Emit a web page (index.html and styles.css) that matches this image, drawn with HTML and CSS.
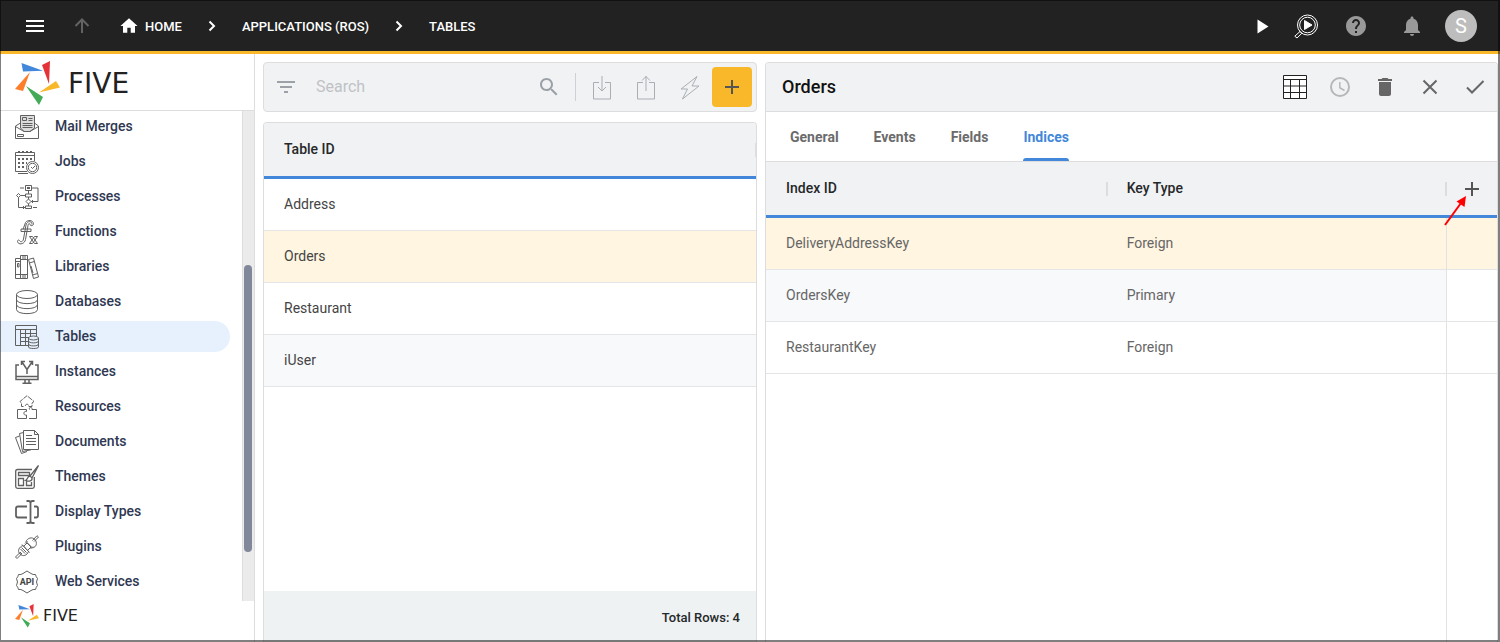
FILE: index.html
```html
<!DOCTYPE html>
<html lang="en">
<head>
<meta charset="utf-8">
<title>Five - Tables</title>
<meta name="viewport" content="width=device-width, initial-scale=1">
<link rel="stylesheet" href="styles.css">
</head>
<body>
<svg class="defs" aria-hidden="true">
  <symbol id="pinwheel" viewBox="0 0 45 45">
    <path fill="#4287d9" d="M6.500 2L28 9.800L8 10.500Z"/>
    <path fill="#e53238" d="M27 4L35 0L34 23Z"/>
    <path fill="#f9b82a" d="M24 31.500L41 20L45 26.500Z"/>
    <path fill="#43aa57" d="M11 25L28 36L24 44Z"/>
    <path fill="#fd7d2a" d="M0 28L15 11L8 30Z"/>
  </symbol>
  <symbol id="chevron" viewBox="0 0 24 24"><path d="M9.500 7.500L14 12L9.500 16.500" fill="none" stroke="currentColor" stroke-width="2"/></symbol>
  <symbol id="plus" viewBox="0 0 24 24"><path d="M12 5V19M5 12H19" fill="none" stroke="currentColor" stroke-width="2"/></symbol>
</svg>

<header class="topbar">
  <button class="icon-btn" aria-label="Menu"><svg class="icon" viewBox="0 0 24 24"><path fill="currentColor" d="M3 6h18v2H3zM3 11h18v2H3zM3 16h18v2H3z"/></svg></button>
  <button class="icon-btn up" aria-label="Up"><svg class="icon line2" viewBox="0 0 24 24"><path d="M12 19V6M5.500 12L12 5.500L18.500 12"/></svg></button>
  <nav class="crumbs" aria-label="Breadcrumb">
    <a class="crumb" href="#"><svg class="icon" viewBox="-2 -2 28 28"><path fill="currentColor" d="M10 20v-6h4v6h5v-8h3L12 3 2 12h3v8z"/></svg><span>HOME</span></a>
    <svg class="icon"><use href="#chevron"/></svg>
    <a class="crumb" href="#"><span>APPLICATIONS (ROS)</span></a>
    <svg class="icon"><use href="#chevron"/></svg>
    <a class="crumb" href="#"><span>TABLES</span></a>
  </nav>
  <div class="top-actions">
    <button class="icon-btn" aria-label="Run"><svg class="icon" viewBox="0 0 24 24"><path fill="currentColor" d="M7.500 5.500V19.500L18.500 12.500Z"/></svg></button>
    <button class="icon-btn" aria-label="Inspect run"><svg class="icon line1" viewBox="0 0 24 24"><circle cx="13.500" cy="11" r="10"/><circle cx="13.500" cy="11" r="7.800"/><path d="M6 17.500L7.800 19.300L3 24L.800 22.200Z"/><path fill="currentColor" d="M10.500 6.500V15.500L18 11Z"/></svg></button>
    <button class="icon-btn help" aria-label="Help"><svg class="icon" viewBox="0 0 24 24"><path fill="currentColor" d="M12 2C6.480 2 2 6.480 2 12s4.480 10 10 10 10-4.480 10-10S17.520 2 12 2zm1 17h-2v-2h2v2zm2.070-7.750l-.9.920C13.450 12.900 13 13.500 13 15h-2v-.5c0-1.100.45-2.100 1.170-2.830l1.240-1.260c.37-.36.59-.86.59-1.410 0-1.100-.9-2-2-2s-2 .9-2 2H8c0-2.210 1.790-4 4-4s4 1.790 4 4c0 .88-.36 1.680-.93 2.250z"/></svg></button>
    <button class="icon-btn bell" aria-label="Notifications"><svg class="icon" viewBox="0 0 24 24"><path fill="currentColor" d="M12 22c1.100 0 2-.9 2-2h-4c0 1.100.9 2 2 2zm6-6v-5c0-3.070-1.630-5.640-4.500-6.320V4c0-.83-.67-1.500-1.500-1.500s-1.500.67-1.500 1.500v.68C7.640 5.360 6 7.920 6 11v5l-2 2v1h16v-1l-2-2z"/></svg></button>
    <button class="avatar" aria-label="Account">S</button>
  </div>
</header>

<div class="workspace">
  <aside class="sidebar">
    <a class="brand" href="#"><svg class="brand-mark"><use href="#pinwheel"/></svg><span>FIVE</span></a>
    <div class="nav-scroll">
      <nav class="side-nav" aria-label="Sections">
        <a class="nav-item" href="#"><svg class="icon" viewBox="0 0 24 24"><path fill="#ddd" d="M5.500 13V.5H19.500V13L15 16.500H9Z"/><path d="M5.500 8L.5 11V23.500H23.500V11L19.500 8M.5 11.500L9 16.500H15L23.500 11.500M2.500 19.500H8.500V21.500H2.500ZM7.500 2.500H11.500V5.500H7.500ZM13.500 3.500H17.500M13.500 5.500H17.500M7.500 8.500H17.500M7.500 10.500H17.500M7.500 12.500H17.500"/></svg>Mail Merges</a>
        <a class="nav-item" href="#"><svg class="icon" viewBox="0 0 24 24"><path d="M12 21.500H.5V2.500H19.500V11M.5 5.500H19.500"/><path stroke-width="2" stroke-dasharray="2 2" d="M3 2H18M3 9H18M3 13H12M3 17H11"/><circle cx="17.500" cy="17.500" r="6"/><circle cx="17.500" cy="17.500" r="4.200"/><path d="M16 17L17.500 18.500L20 16M3 23.500H13"/></svg>Jobs</a>
        <a class="nav-item" href="#"><svg class="icon" viewBox="0 0 24 24"><path d="M10.500.5H16.500V5.500H10.500ZM12 2.500H15M12 3.500H15M13.500 5.500V9M10.500 9H16.500V12H10.500ZM13.500 12V14M13.500 14L16 16.500L13.500 19L11 16.500ZM13.500 19V21M10.500 21H16.500V23.500H10.500ZM16.500 3H23V16.500H16M18 15L16.500 16.500L18 18M3.500 8.500L5.500 10.500L3.500 12.500L1.500 10.500ZM5.500 10.500H10.500M3.500 12.500V22.500H10M8 21L9.500 22.500L8 24M5 3H9M18 22.500H22"/></svg>Processes</a>
        <a class="nav-item" href="#"><svg class="icon" viewBox="0 0 24 24"><path d="M17 4.500C17.500 1 12 .2 11 5L8.500 19C8 22 5.500 22.500 4.500 20.500C4 19.500 2.300 20 2.500 21.500C3 25 9.500 24.800 10.500 19.500L13 5.500C13.300 3 14.800 3 15 4.500C15.200 6.200 18.800 6.200 18.500 3.500C18 0 12.500-.5 10.500 2.500L8 9.500M6 9H16V11.500H6ZM14.500 16.500H17.500L22.500 23.500H19.500ZM19.500 16.500H22.500L17.500 23.500H14.500Z"/></svg>Functions</a>
        <a class="nav-item" href="#"><svg class="icon" viewBox="0 0 24 24"><path d="M.5 3.500H5.500V23.500H.5ZM5.500.5H12.500V23.500H5.500ZM.5 6.500H5.500M.5 19.500H5.500M2.500 8.500H4V12H2.500ZM5.500 4.500H12.500M5.500 19.500H12.500M8 .5V4M10 .5V4M8 20V23M10 20V23M13.500 4.500L18.500 3L23.500 22L18.500 23.500ZM14.300 8L19.300 6.500M17.500 20L22.500 18.500M16 11L18 18"/></svg>Libraries</a>
        <a class="nav-item" href="#"><svg class="icon" viewBox="0 0 24 24"><ellipse cx="12" cy="4.500" rx="10.500" ry="4"/><path d="M1.500 4.500V19.500C1.500 25 22.500 25 22.500 19.500V4.500M1.500 9.500C1.500 15 22.500 15 22.500 9.500M1.500 14.500C1.500 20 22.500 20 22.500 14.500"/></svg>Databases</a>
        <a class="nav-item active" href="#"><svg class="icon" viewBox="0 0 24 24"><path d="M13 20.500H.5V.5H21.500V11M.5 4.500H21.500M5.500 4.500V20.500M10.500 4.500V20.500M15.500 4.500V12M5.500 8.500H21.500M5.500 12.500H14M5.500 16.500H13"/><path fill="#e7f1fd" d="M13.500 13V22C13.500 24 23.500 24 23.500 22V13"/><ellipse cx="18.500" cy="13" rx="5" ry="2"/><path d="M13.500 16C13.500 18.500 23.500 18.500 23.500 16M13.500 19C13.500 21.500 23.500 21.500 23.500 19"/></svg>Tables</a>
        <a class="nav-item" href="#"><svg class="icon" viewBox="0 0 24 24"><path stroke-width="1.500" d="M4 5H1V19.500H23V5H20M1 16.500H23M10 20V22.500M14 20V22.500M7.500 23.300H16.500M12 14V9.500L7 2M12 9.500L17 2M6.500 5V1.500H10M14 1.500H17.500V5"/></svg>Instances</a>
        <a class="nav-item" href="#"><svg class="icon" viewBox="0 0 24 24"><path stroke-dasharray="5 1" d="M8.500 11.500H6.500V8.500L5 6.500L12 .7L19 6.500L17 8V11.500H13.500C14.500 8.500 9.500 8.500 10.500 11.500"/><path d="M2.500 14.500H11.500V16.500C8 15.500 8 21 11.500 20V23.500H2.500ZM14.500 14.500C13.500 11.500 17.500 11.500 17 14.500H21.500V23.500H14"/></svg>Resources</a>
        <a class="nav-item" href="#"><svg class="icon" viewBox="0 0 24 24"><path d="M8.500.5H19.500L23.500 4.500V19.500H8.500ZM19.500.5V4.500H23.500M11 5.500H17M11 8.500H21M11 11.500H21M11 14.500H21M8.500 2.500L4.500 3.500L7.500 21.500L16 19.800M4.500 6L.5 7.500L6.500 23.500L12 21.500"/></svg>Documents</a>
        <a class="nav-item" href="#"><svg class="icon" viewBox="0 0 24 24"><path stroke-width="1.300" d="M17 4.500H2.500Q.7 4.500 .7 6.500V21.500Q.7 23.300 2.500 23.300H17.500Q19.300 23.300 19.300 21.500V12M3.500 7.500H14.500V10.500H3.500ZM3.500 13.500H8.500V20.500H3.500ZM11.500 14V20.500H16.500V17M23.500 .5L15 11L17 13ZM15 11C12 11 13 14.500 10.500 15.500C14 17 17.500 16 17 13"/></svg>Themes</a>
        <a class="nav-item" href="#"><svg class="icon" viewBox="0 0 24 24"><path stroke-width="1.800" d="M12 6.500H3Q1 6.500 1 8.500V15.500Q1 17.500 3 17.500H12M19 6.500H21Q23 6.500 23 8.500V15.500Q23 17.500 21 17.500H19M15.500 2V22M11.500 1H13.500Q15.500 1 15.500 3Q15.500 1 17.500 1H19.500M11.500 23H13.500Q15.500 23 15.500 21Q15.500 23 17.500 23H19.500"/></svg>Display Types</a>
        <a class="nav-item" href="#"><svg class="icon" viewBox="0 0 24 24"><path d="M.5 22L5 17.500L6.500 19L2 23.500ZM17.500 5.500L22 .7L23.500 2L19 6.500M5 19C2 16 4 12 8 10.500L13.500 16.500C12 20.500 8 22 5 19ZM11 6.500L17.500 13C21.500 12 22.500 8 20 4.500C17 1.500 12.500 3 11 6.500ZM7 9.500L14.500 17.500M10 8.500L12.500 6M15.500 14L18 11.500M9 11L12 8L16 12L13 15M5.500 14L10 18.500M6.500 12.500L11.500 17.500M5 17L7 19"/></svg>Plugins</a>
        <a class="nav-item" href="#"><svg class="icon" viewBox="0 0 24 24"><path d="M8 3.500L12 1L16 3.500Q18 5 20.500 4.500Q21 7 22.500 8.500L21.500 12L22.500 15.500Q21 17 20.500 19.500Q18 19 16 20.500L12 23L8 20.500Q6 19 3.500 19.500Q3 17 1.500 15.500L2.500 12L1.500 8.500Q3 7 3.500 4.500Q6 5 8 3.500Z"/><text x="12" y="15" text-anchor="middle">API</text></svg>Web Services</a>
      </nav>
      <div class="scroll-track"><div class="scroll-thumb"></div></div>
    </div>
    <a class="brand small" href="#"><svg class="brand-mark"><use href="#pinwheel"/></svg><span>FIVE</span></a>
  </aside>

  <main class="content">
    <section class="list-pane">
      <div class="toolbar">
        <button class="icon-btn" aria-label="Filter"><svg class="icon" viewBox="0 0 24 24"><path fill="currentColor" d="M3 6h18v2H3zM6 11h12v2H6zM10 16h4v2h-4z"/></svg></button>
        <input class="search" type="search" placeholder="Search" aria-label="Search">
        <button class="icon-btn" aria-label="Find"><svg class="icon" viewBox="0 0 24 24"><path fill="currentColor" d="M15.500 14h-.79l-.28-.27C15.410 12.590 16 11.110 16 9.500 16 5.910 13.090 3 9.500 3S3 5.910 3 9.500 5.910 16 9.500 16c1.610 0 3.090-.59 4.230-1.570l.27.28v.79l5 4.990L20.490 19l-4.990-5zm-6 0C7.010 14 5 11.990 5 9.500S7.010 5 9.500 5 14 7.010 14 9.500 11.990 14 9.500 14z"/></svg></button>
        <span class="divider"></span>
        <div class="tool-group">
          <button class="icon-btn" aria-label="Import"><svg class="icon line1" viewBox="0 0 24 24"><path d="M9 7.500H3.500V24H20.500V7.500H15M12 1V16M8 12L12 16L16 12"/></svg></button>
          <button class="icon-btn" aria-label="Export"><svg class="icon line1" viewBox="0 0 24 24"><path d="M9 7.500H3.500V24H20.500V7.500H15M12 16V1M8 5.500L12 1.500L16 5.500"/></svg></button>
          <button class="icon-btn" aria-label="Quick actions"><svg class="icon line1" viewBox="0 0 24 24"><path d="M19 1.500L3 14H9.500L4.500 24L21 11H14Z"/></svg></button>
        </div>
        <button class="add-btn" aria-label="Add table"><svg class="icon"><use href="#plus"/></svg></button>
      </div>
      <div class="card">
        <table class="grid">
          <thead><tr><th class="resizable">Table ID</th></tr></thead>
          <tbody>
            <tr><td>Address</td></tr>
            <tr class="selected"><td>Orders</td></tr>
            <tr><td>Restaurant</td></tr>
            <tr class="alt"><td>iUser</td></tr>
          </tbody>
        </table>
        <footer class="totals">Total Rows: 4</footer>
      </div>
    </section>

    <section class="detail-pane">
      <div class="detail-head">
        <h1>Orders</h1>
        <div class="detail-actions">
          <button class="icon-btn data" aria-label="Data view"><svg class="icon line1" viewBox="0 0 24 24"><path fill="#fff" d="M.5.5H23.500V23.500H.5Z"/><path d="M.5 4.500H23.500M.5 11H23.500M.5 17.500H23.500M7.500 4.500V23.500M16.500 4.500V23.500"/></svg></button>
          <button class="icon-btn faded" aria-label="History"><svg class="icon line2" viewBox="0 0 24 24"><circle cx="12" cy="12" r="9"/><path stroke-width="1.500" d="M11.800 7V12.700L16.500 15.500"/></svg></button>
          <button class="icon-btn" aria-label="Delete"><svg class="icon" viewBox="0 0 24 24"><path fill="currentColor" d="M6 19c0 1.100.9 2 2 2h8c1.100 0 2-.9 2-2V7H6v12zM19 4h-3.500l-1-1h-5l-1 1H5v2h14V4z"/></svg></button>
          <button class="icon-btn" aria-label="Close"><svg class="icon line2" viewBox="0 0 24 24"><path d="M5.500 5.500L18.500 18.500M18.500 5.500L5.500 18.500"/></svg></button>
          <button class="icon-btn" aria-label="Save"><svg class="icon line2" viewBox="0 0 24 24"><path d="M4 12.500L9 17.500L20.500 6"/></svg></button>
        </div>
      </div>
      <div class="tabs" role="tablist">
        <button class="tab" role="tab">General</button>
        <button class="tab" role="tab">Events</button>
        <button class="tab" role="tab">Fields</button>
        <button class="tab current" role="tab" aria-selected="true">Indices</button>
      </div>
      <div class="index-wrap">
        <table class="grid indices">
          <thead><tr>
            <th class="resizable key-col">Index ID</th>
            <th class="resizable">Key Type</th>
            <th class="add-col">
              <button class="icon-btn" aria-label="Add index"><svg class="icon"><use href="#plus"/></svg></button>
              <svg class="pointer" viewBox="0 0 24 32" aria-hidden="true"><path d="M1 31L17 9" stroke="#f00" stroke-width="2"/><path d="M22 2L12.500 7.500L20.500 13Z" fill="#f00"/></svg>
            </th>
          </tr></thead>
          <tbody>
            <tr class="selected"><td>DeliveryAddressKey</td><td>Foreign</td><td class="add-col"></td></tr>
            <tr class="alt"><td>OrdersKey</td><td>Primary</td><td class="add-col"></td></tr>
            <tr><td>RestaurantKey</td><td>Foreign</td><td class="add-col"></td></tr>
            <tr class="filler"><td></td><td></td><td class="add-col"></td></tr>
          </tbody>
        </table>
      </div>
    </section>
  </main>
</div>
</body>
</html>
```
FILE: styles.css
```css
* { box-sizing: border-box; }

body {
  margin: 0;
  height: 100vh;
  display: flex;
  flex-direction: column;
  overflow: hidden;
  background: #fff;
  color: #262829;
  font: 14px/20px Roboto, "Liberation Sans", sans-serif;
}

/* Window frame laid over every edge of the app */
body::after {
  content: "";
  position: fixed;
  inset: 0;
  border: 1px solid rgba(0, 0, 0, .5);
  border-width: 1px 2px 2px 1px;
  pointer-events: none;
}

.defs { position: absolute; width: 0; height: 0; }

button {
  padding: 0;
  border: 0;
  background: none;
  color: inherit;
  font: inherit;
}
a { color: inherit; text-decoration: none; }

.icon { display: block; flex: none; width: 24px; height: 24px; overflow: visible; }
.icon-btn { flex: none; display: block; }
.line1, .line2 { fill: none; stroke: currentColor; }
.line2 { stroke-width: 2; }

/* Top bar */
.topbar {
  flex: none;
  display: flex;
  align-items: center;
  gap: 23px;
  height: 54px;
  padding: 0 23px;
  border-bottom: 3px solid #f9b82a;
  background: #222;
  color: #fff;
}
.up { color: #636363; }
.crumbs { display: flex; align-items: center; gap: 18px; font-size: 13px; font-weight: 500; }
.crumb { display: flex; align-items: center; gap: 4px; }
.crumb span { padding-top: 2px; }
.top-actions { display: flex; align-items: center; gap: 20px; margin-left: auto; }
.help, .bell { color: #999; }
.help { margin-left: 6px; }
.bell { margin-left: 12px; }
.avatar {
  width: 32px;
  height: 32px;
  margin-left: 1px;
  border-radius: 50%;
  background: #bdbdbd;
  font-size: 20px;
}

.workspace { flex: 1; min-height: 0; display: flex; }

/* Sidebar */
.sidebar {
  flex: none;
  display: flex;
  flex-direction: column;
  width: 255px;
  border-right: 1px solid #ddd;
}
.brand {
  flex: none;
  display: flex;
  align-items: center;
  gap: 8px;
  height: 57px;
  padding: 3px 0 0 15px;
  border-bottom: 1px solid #ddd;
  color: #222;
  font: 28px/32px "DejaVu Sans", sans-serif;
}
.brand-mark { width: 45px; height: 45px; }
.brand.small { gap: 4px; height: 41px; padding: 0 0 12px 15px; border: 0; font-size: 16px; line-height: 20px; }
.brand.small .brand-mark { width: 24px; height: 24px; }

.nav-scroll { flex: 1; min-height: 0; display: flex; overflow: hidden; }
.side-nav { flex: 1; display: flex; flex-direction: column; gap: 4px; padding-right: 12px; }
.nav-item {
  flex: none;
  display: flex;
  align-items: flex-start;
  gap: 16px;
  height: 31px;
  padding: 4px 0 0 15px;
  border-radius: 0 16px 16px 0;
  color: #2f3852;
  line-height: 22px;
  font-weight: 500;
}
.nav-item.active { background: #e7f1fd; }
.nav-item .icon { fill: none; stroke: #606060; }
.nav-item text { fill: #444; stroke: none; font: bold 9px Roboto, sans-serif; }
.scroll-track { width: 12px; padding: 154px 2px 49px 1px; border-left: 1px solid #ddd; background: #ebebeb; }
.scroll-thumb { height: 100%; border-radius: 4px; background: #82889b; }

/* Content panes */
.content {
  flex: 1;
  min-width: 0;
  display: grid;
  grid-template-columns: minmax(0, 494fr) minmax(0, 733fr);
  gap: 8px;
  padding: 8px 2px 0 8px;
}
.list-pane { display: flex; flex-direction: column; gap: 10px; min-height: 0; }
.toolbar {
  flex: none;
  display: flex;
  align-items: center;
  height: 50px;
  padding: 0 4px 0 10px;
  border: 1px solid #ddd;
  border-radius: 4px;
  background: #f1f2f4;
  color: #9ba1a7;
}
.search {
  flex: 1;
  min-width: 0;
  margin-left: 18px;
  padding: 0;
  border: 0;
  outline: 0;
  background: none;
  font: 16px/24px Roboto, sans-serif;
}
.search::placeholder { color: #bfc2c5; opacity: 1; }
.divider { width: 1px; height: 28px; margin: 0 14px; background: #ced1d4; }
.tool-group { display: flex; gap: 20px; margin-right: 10px; color: #a9aeb3; }
.add-btn {
  display: grid;
  place-items: center;
  width: 40px;
  height: 40px;
  border-radius: 4px;
  background: #f9b82a;
  color: #555;
}

.card, .detail-pane {
  display: flex;
  flex-direction: column;
  min-height: 0;
  border: 1px solid #ddd;
  border-bottom: 0;
  border-radius: 4px 4px 0 0;
  overflow: hidden;
}
.card { flex: 1; }

.grid { width: 100%; border-spacing: 0; table-layout: fixed; }
.grid th {
  position: relative;
  height: 56px;
  padding: 0 20px 2px;
  border-bottom: 3px solid #4287d9;
  background: #f1f2f4;
  text-align: left;
  font-weight: 500;
}
.grid td { height: 52px; padding: 0 20px 2px; border-bottom: 1px solid #e4e5e6; color: #444; }
.grid .alt td { background: #f8f9fb; }
.grid .selected td { background: #fff5e1; }
.resizable::after {
  content: "";
  position: absolute;
  z-index: 1;
  top: 20px;
  right: -1px;
  width: 2px;
  height: 14px;
  background: #ddd;
}

.totals {
  margin-top: auto;
  height: 51px;
  padding: 17px 16px;
  background: #eef2f3;
  text-align: right;
  font-size: 13px;
  font-weight: 500;
}

/* Detail pane */
.detail-head {
  flex: none;
  display: flex;
  align-items: center;
  justify-content: space-between;
  height: 49px;
  padding: 0 10px 0 16px;
  border-bottom: 1px solid #ddd;
  background: #f1f2f4;
}
h1 { margin: 0; color: #111; font-size: 18px; line-height: 24px; font-weight: 500; }
.detail-actions { display: flex; gap: 21px; color: #666; }
.data { color: #222; }
.faded { color: #b5b7b9; }

.tabs {
  flex: none;
  display: flex;
  gap: 35px;
  height: 50px;
  padding-left: 24px;
  border-bottom: 1px solid #ddd;
}
.tab { position: relative; color: #6b6b6b; font-weight: 700; }
.tab.current { color: #4287d9; }
.tab.current::after {
  content: "";
  position: absolute;
  inset: auto 0 0;
  height: 3px;
  border-radius: 3px 3px 0 0;
  background: #4287d9;
}

.index-wrap { flex: 1; min-height: 0; }
.indices { height: 100%; }
.indices td { color: #666; }
.indices .key-col { width: 46.6%; }
.indices .add-col { width: 51px; padding: 0 0 0 14px; }
.indices td.add-col { border-left: 1px solid #e2e2e2; }
.indices .alt td.add-col { background: #fff; }
.indices .filler td { height: auto; border-bottom: 0; }
.add-col .icon-btn { color: #555; }
.pointer { position: absolute; left: -2px; top: 32px; z-index: 1; width: 24px; height: 32px; overflow: visible; }
```
